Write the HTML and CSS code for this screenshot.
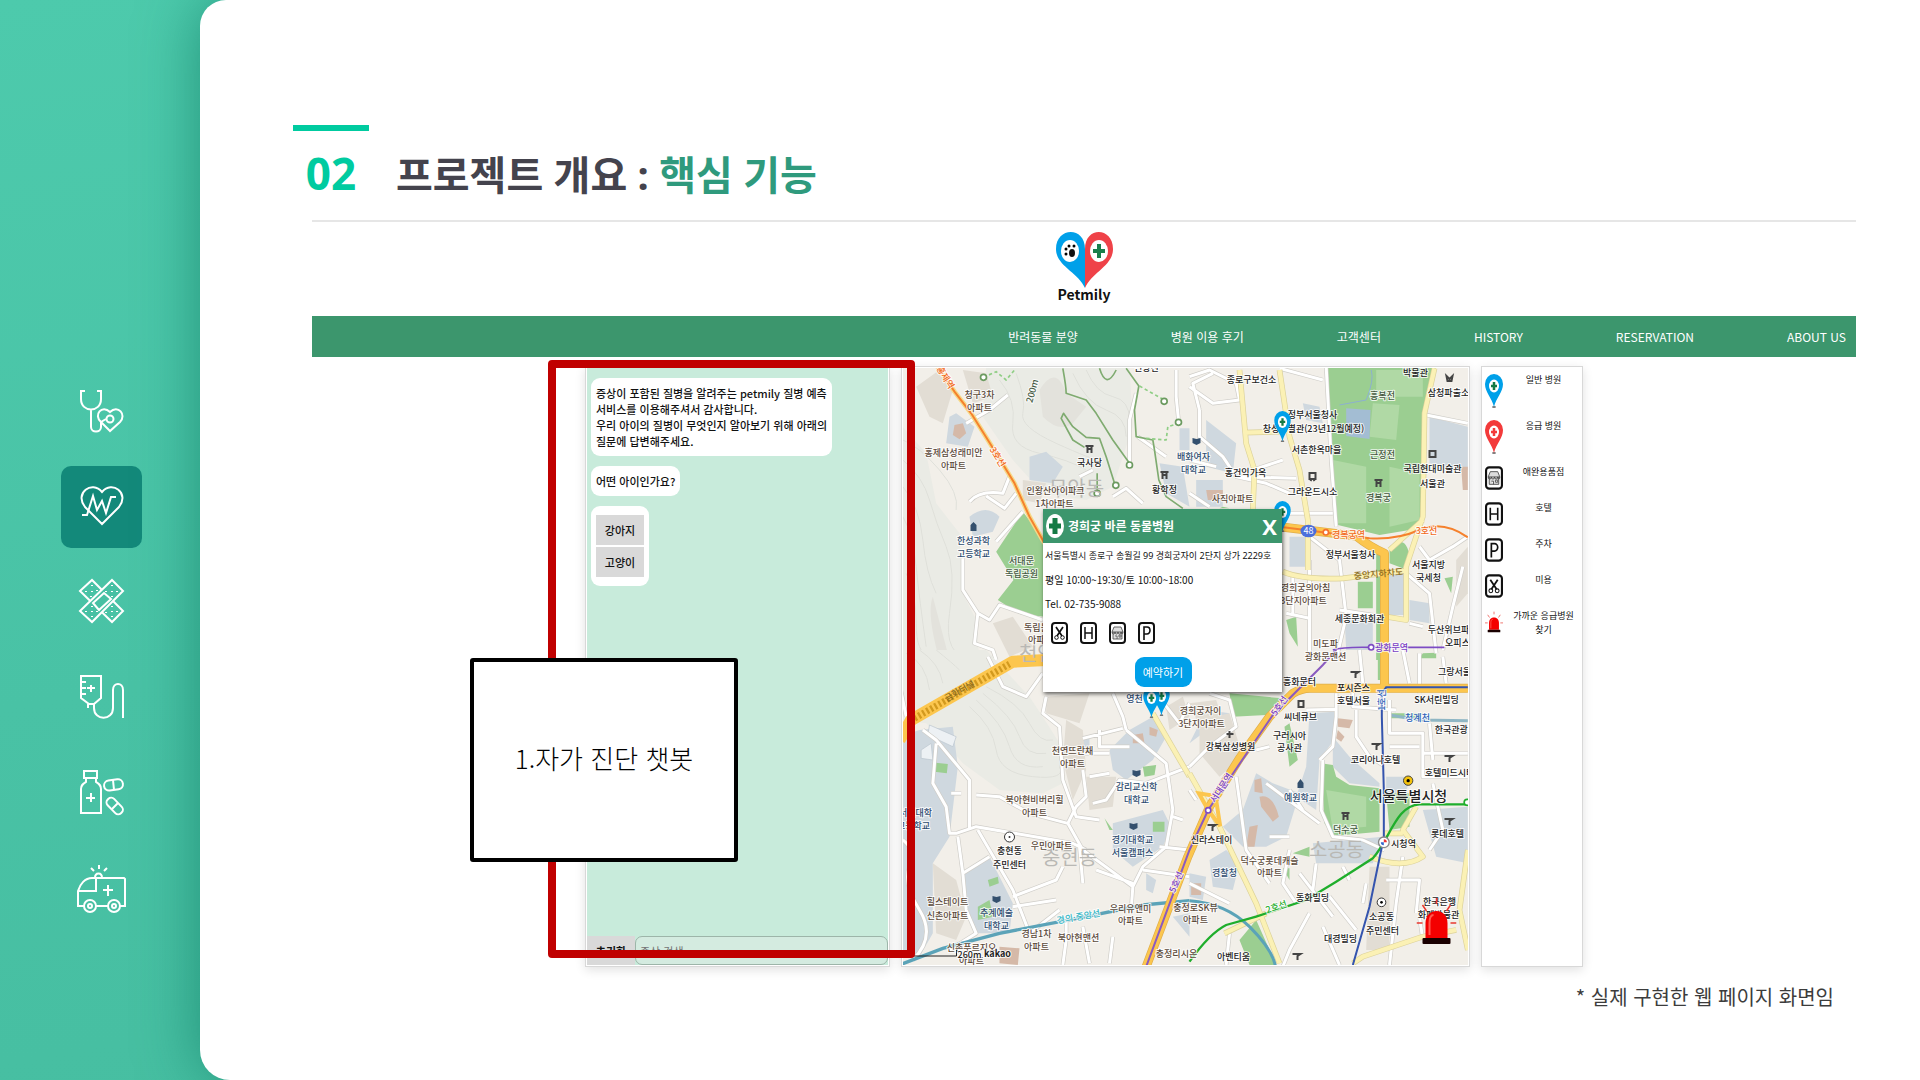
FILE: index.html
```html
<!DOCTYPE html>
<html lang="ko">
<head>
<meta charset="utf-8">
<meta name="viewport" content="width=device-width, initial-scale=1">
<title>프로젝트 개요 : 핵심 기능</title>
<link rel="stylesheet" href="styles.css">
</head>
<body>
<svg class="defs" aria-hidden="true">
  <defs>
    <symbol id="pin" viewBox="0 0 18 35">
      <ellipse cx="9" cy="33" rx="2" ry="1" fill="#777"/>
      <path d="M9 33C7 24 0 18 0 10a9 10 0 0 1 18 0c0 8-7 14-9 23z" fill="currentColor"/>
      <ellipse cx="9" cy="12" rx="5" ry="6.500" fill="#fff"/>
      <path class="pin-cross" d="M9 8v8M6 12h6" stroke-width="2.500"/>
    </symbol>
    <symbol id="ic-scissors" viewBox="0 0 17 22">
      <rect x="1" y="1" width="15" height="20" rx="3" fill="#fff" stroke="#111" stroke-width="2"/>
      <path d="M5 5l6 9M12 5l-6 9" stroke="#111" stroke-width="1.700" fill="none"/>
      <circle cx="5.500" cy="15.500" r="1.800" fill="none" stroke="#111"/><circle cx="11.500" cy="15.500" r="1.800" fill="none" stroke="#111"/>
    </symbol>
    <symbol id="ic-hotel" viewBox="0 0 17 22">
      <rect x="1" y="1" width="15" height="20" rx="3" fill="#fff" stroke="#111" stroke-width="2"/>
      <path d="M5 5v12M12 5v12M5 11h7" stroke="#111" stroke-width="1.500" fill="none"/>
    </symbol>
    <symbol id="ic-store" viewBox="0 0 17 22">
      <rect x="1" y="1" width="15" height="20" rx="3" fill="#fff" stroke="#111" stroke-width="2"/>
      <path d="M5 5h7l2 5H3zM4 10v7h9v-7M3 10a1.500 2 0 0 0 3 0 1.500 2 0 0 0 3 0 1.500 2 0 0 0 3 0 1 2 0 0 0 2 0M6 14h2v3M10 13h2v2h-2z" stroke="#444" fill="#ddd" stroke-width=".8"/>
    </symbol>
    <symbol id="ic-parking" viewBox="0 0 17 22">
      <rect x="1" y="1" width="15" height="20" rx="3" fill="#fff" stroke="#111" stroke-width="2"/>
      <path d="M6 18V5h3a3 3.500 0 0 1 0 7H6" stroke="#111" stroke-width="1.600" fill="none"/>
    </symbol>
    <symbol id="ic-siren" viewBox="0 0 40 48">
      <path d="M20 1v6M6 8l4 6M34 8l-4 6M0 26h6M34 26h6" stroke="#e8382f" stroke-width="1.500"/>
      <path d="M9 41V26c0-16 22-16 22 0v15z" fill="#f40000"/>
      <path d="M13 38V26c0-6 2-8 4-8" stroke="#ff5a50" stroke-width="2" fill="none"/>
      <rect x="6" y="41" width="28" height="6" rx="1" fill="#1a0000"/>
    </symbol>
    <path id="streets-nw" d="M210 425Q240 390 310 400L330 350M260 408L315 445 350 400M200 190L270 150 325 105M190 595V690L235 760 225 850 280 870 290 900M235 760L270 780 300 735 430 780M290 545L370 455M690 310V180L710 100M830 30V110L837 180M540 350L580 330M640 410L680 385 730 430M715 230L800 290"/>
    <path id="streets-ne" d="M0 50L60 30 140 70 150 120 70 130 0 80M30 150L10 70 70 40M30 150V230L100 290 140 350 230 370 300 400M140 350L320 355M190 330L280 300M410 20L425 300 440 500M270 25L400 60M300 460H430M0 400L60 440M360 530L450 600 470 770 440 900M360 600V900M450 750L580 770M290 760L360 775M650 640L720 700 740 880M710 165L835 190M690 560L720 600 790 560 835 530M310 640V760M0 300L80 320M760 870L790 740 820 620M660 790L700 800"/>
    <path id="streets-sw" d="M70 240L110 270 160 330 210 390V540M110 280L100 400 140 470 150 550 170 550 230 530 520 580 560 600M175 560L190 670 200 780 230 850 150 900M235 540L340 720 390 850M190 670L270 620M340 740L470 690 490 650M230 435L300 440 390 490 505 520 530 470 560 440 550 360M505 520L550 600 700 710 730 650 800 590 820 480 800 340 680 240M700 710L695 780M440 140L430 190 480 230 490 390 530 500 600 510M550 265L670 235M600 240V290H690M550 310H630M570 380L630 370M580 460L620 450 660 390 740 400 870 350M730 660L870 680M340 770L470 750M500 800V870L490 945M540 590L550 700M550 830L570 940M630 940L640 860M590 660L700 700M770 130L840 220 870 160M640 130L670 200 680 240M155 430H185M265 20L310 110 380 140 430 70M0 100L20 200M10 570Q50 600 30 650T60 780T40 930M820 500L850 510M780 590L870 600M390 850L480 780"/>
    <path id="streets-se" d="M440 130V200L430 290 390 330M400 330L395 480 430 560 520 570 585 600M0 350L60 290 140 230 120 150 60 130M200 300L240 290M230 400L390 520M140 380L170 600 240 700M500 180V260L540 320 580 345M600 150V250H700V380H835M690 10L690 130M760 20L770 100M600 290H690M700 310H835M640 0L660 100M510 0L520 100M590 690H690L680 790M300 600L280 700 320 760M380 640L370 720M330 670L430 800M460 650L480 690M0 700L120 760M360 790L300 900 280 950M400 830L450 945M640 620L620 760 600 945M530 700L520 760M690 800L700 870M20 450L0 420M720 220L730 330M730 400L760 540 720 600M490 110V170L620 180M350 180L440 178M100 50L170 0M240 560H300M300 420L340 480M120 850L110 945M420 740L500 840"/>
    <path id="avenues-ne" d="M150 30L170 250 195 330 190 450M165 218L270 215M270 30L300 230 330 330 355 480V630M280 635Q340 660 460 655L645 632M735 25L705 160 700 470 650 620V780L590 770M700 480L600 570"/>
    <path id="avenues-sw" d="M760 190L870 380"/>
    <path id="avenues-se" d="M0 370L90 530 200 760 270 940M105 850L230 790M540 620Q640 660 700 620L640 540 680 470M585 550H640M835 600L810 780 835 900M490 940L520 920 700 860 800 840"/>
    <path id="main-ne" d="M270 500L500 528Q540 560 585 580V905"/>
    <path id="main-se" d="M-130 950L-5 620 60 470 150 325 240 200 310 130Q340 112 370 115H835M585 0V110"/>
  </defs>
</svg>

<aside class="rail">
  <nav class="rail-nav" aria-label="목차">
    <a href="#s1" class="rail-link" aria-label="청진기"><svg viewBox="0 0 48 48" class="rail-icon">
      <path d="M7 3H3v8c0 14 20 14 20 0V3h-4M13 21v18c0 6 10 6 10 0v-5l5-3"/>
      <path d="M32 43l-9-9c-8-7 1-18 9-10 8-8 17 3 10 10z"/><circle cx="32" cy="31" r="3.500"/></svg></a>
    <a href="#s2" class="rail-link rail-link-on" aria-current="page" aria-label="심박"><svg viewBox="0 0 48 48" class="rail-icon">
      <path d="M24 41L7 24C-4 10 14-3 24 9c10-12 28 1 17 15z"/><path d="M4 32h5l6-19 4 14 5-9 4 12 5-16h5"/></svg></a>
    <a href="#s3" class="rail-link" aria-label="반창고"><svg viewBox="0 0 48 48" class="rail-icon">
      <path d="M2 13L14 2l31 31-11 11z"/><path class="cut" d="M34 2l11 11-31 31L2 33z"/><path d="M26 15l7 6-12 11-6-7z"/>
      <path class="dots" d="M14 7v1M8 13v1M14 13v1M19 12v1M13 18v1M34 7v1M28 13v1M34 13v1M39 13v1M34 18v1M14 28v1M8 33v1M14 33v1M19 33v1M14 38v1M34 28v1M28 34v1M34 33v1M39 33v1M34 38v1"/></svg></a>
    <a href="#s4" class="rail-link" aria-label="수액"><svg viewBox="0 0 48 48" class="rail-icon">
      <path d="M3 3h20v22l-7 6h-5l-8-6zM3 9h5M3 15h5M3 21h5M13 12v7M9 15h8M10 31v4M16 31v4c0 13 19 13 19 0V17c0-8 10-8 10 0v28"/></svg></a>
    <a href="#s5" class="rail-link" aria-label="의약품"><svg viewBox="0 0 48 48" class="rail-icon">
      <path d="M6 3h13v7H6zM8 10v4c-3 2-5 3-5 7v24h20V21c0-4-2-5-5-7v-4M13 25v9M8 30h9"/>
      <rect x="26" y="12" width="19" height="10" rx="5" transform="rotate(-8 35 17)"/><path d="M35 12l1 10"/>
      <rect x="27" y="33" width="19" height="9" rx="4" transform="rotate(46 36 38)"/><path d="M40 35l-6 6"/></svg></a>
    <a href="#s6" class="rail-link" aria-label="구급차"><svg viewBox="0 0 52 52" class="rail-icon rail-icon-wide">
      <path d="M8 45H2V30c2-7 7-13 14-13h32l1 1v27h-5M20 45h12M2 30h18V17M19 17c0-6 7-6 7 0M32 24v11M27 29h10M23 4v4M15 7l3 3M31 7l-3 3"/>
      <circle cx="14" cy="45" r="6"/><circle cx="14" cy="45" r="2"/><circle cx="38" cy="45" r="6"/><circle cx="38" cy="45" r="2"/></svg></a>
  </nav>
</aside>

<main class="sheet">
  <header class="head">
    <span class="head-no">02</span>
    <h1 class="head-title">프로젝트 개요 : <span class="head-key">핵심 기능</span></h1>
  </header>

  <section class="site">
    <div class="brand">
      <svg class="brand-mark" viewBox="0 0 57 56" aria-hidden="true">
        <path d="M29 56C22 40 0 34 0 17 0-5 29-6 29 17z" fill="#00a0e9"/>
        <path d="M29 56c7-16 28-22 28-39C57-5 29-6 29 17z" fill="#ef4248"/>
        <ellipse cx="14" cy="19" rx="9" ry="11" fill="#fff"/><ellipse cx="43" cy="19" rx="9" ry="11" fill="#fff"/>
        <path d="M43 12v14M37 19h12" stroke="#1a7f4b" stroke-width="4"/>
        <ellipse cx="16" cy="21" rx="3" ry="4" fill="#111"/><circle cx="10" cy="17" r="1.500"/><circle cx="13" cy="14" r="1.500"/><circle cx="18" cy="14" r="1.500"/><circle cx="10" cy="22" r="1.500"/>
      </svg>
      <span class="brand-name">Petmily</span>
    </div>
    <nav class="menu" aria-label="주 메뉴">
      <a href="#adopt">반려동물 분양</a><a href="#review">병원 이용 후기</a><a href="#help">고객센터</a><a href="#history">HISTORY</a><a href="#reservation">RESERVATION</a><a href="#about">ABOUT US</a>
    </nav>

    <div class="panels">
      <section class="card chat">
        <div class="chat-log">
          <p class="bubble">증상이 포함된 질병을 알려주는 petmily 질병 예측<br>서비스를 이용해주셔서 감사합니다.<br>우리 아이의 질병이 무엇인지 알아보기 위해 아래의<br>질문에 답변해주세요.</p>
          <p class="bubble">어떤 아이인가요?</p>
          <div class="bubble choices"><button type="button">강아지</button><button type="button">고양이</button></div>
        </div>
        <form class="chat-form">
          <button type="reset">초기화</button>
          <input type="text" aria-label="증상 검색" placeholder="증상 검색">
        </form>
      </section>

      <section class="card map">
        <svg class="map-art" viewBox="903 368 566 597" preserveAspectRatio="xMidYMid slice" role="img" aria-label="지도">
          <rect x="903" y="368" width="566" height="597" fill="#f2efe9"/>
          <g transform="translate(900 360) scale(.33333)">
            <path class="hill" d="M0 190L80 280 110 430 180 520 190 700 230 780 240 900H0zM260 20H690L700 200 640 380 560 420 430 400 340 300 250 170z"/>
            <path class="hill2" d="M420 90Q470 10 500 100L560 140 520 190Q480 220 430 170zM120 900Q80 760 100 710L150 900z"/>
            <path class="contour" d="M10 300Q70 350 90 420T140 560T150 760T220 900M10 380Q60 440 70 540T110 700M10 470Q40 520 50 620T80 860M300 60Q350 120 340 190T420 280T560 330M350 40Q380 120 370 160T470 250T600 300M560 30Q590 100 640 110T690 180M520 40Q560 130 620 150T680 230M10 240Q60 260 120 330T170 450M20 640Q50 700 50 790T90 890"/>
            <path class="school" d="M150 170L170 160 225 200 205 260 140 250zM390 290L440 275 490 320 460 370 390 360zM210 470Q260 430 300 470L280 515 220 530zM780 310L850 320 870 440 800 400zM840 205H870V270H840z"/>
            <path class="block" d="M50 80L120 30 160 90 130 190 90 170zM190 30L260 40 280 110 220 130zM370 360L440 370 420 430 370 420zM280 790L340 770 400 860 330 890z"/>
            <path class="court" d="M165 195L190 190 200 220 180 238 160 225z"/>
            <path class="park" d="M290 575L370 455 435 540V770L360 762 295 720 342 660z"/>
            <use href="#streets-nw" class="case"/><use href="#streets-nw" class="road"/>
            <path d="M100 0L165 95 215 160 290 280 345 370 390 470 435 550" fill="none" stroke="#f6d987" stroke-width="14"/>
            <path d="M100 0L165 95 215 160 290 280 345 370 390 470 435 550" fill="none" stroke="#f5812d" stroke-width="6"/>
            <path class="trail" d="M490 25Q500 80 500 100L560 120 590 160 640 240 690 310M555 262L520 240 485 175 492 160 520 200 560 232 600 235 620 290 645 370M593 340V400M600 25Q620 90 650 30M680 25L718 78 705 150 710 230 760 240 765 270 778 360 800 410 850 445"/>
            <path class="trail dash" d="M252 52L290 35 320 60 345 30M720 78L794 120M740 235L800 240 805 200 837 190"/>
            <g fill="#fff" stroke="#6b9a5f" stroke-width="5"><circle cx="252" cy="52" r="9"/><circle cx="690" cy="315" r="9"/><circle cx="649" cy="376" r="9"/><circle cx="593" cy="400" r="9"/><circle cx="794" cy="124" r="9"/><circle cx="837" cy="187" r="9"/></g>
          </g>
          <g transform="translate(1190 360) scale(.33333)">
            <path class="school" d="M50 180L140 250 130 340 50 320zM20 360H100V440H20zM340 130L390 140 400 190 350 180zM720 170L835 200V330L720 310zM300 530H350V620H300zM595 645H645V765H595zM660 720L720 730V790L660 780zM465 770H550V870H470z"/>
            <path class="court" d="M50 390H100V420H55zM815 320H835V390H820z"/>
            <path class="park" d="M412 20H740L705 160 695 480 660 510 570 525 445 495 428 300z"/>
            <path class="park2" d="M430 300L530 320 530 490 445 490zM550 130L630 135 620 240 540 230zM600 320L690 340V480L600 500zM560 30H700V110H560z"/>
            <path d="M470 145L543 150 540 237 470 228z" fill="#a3bdd3"/>
            <path d="M545 30Q555 60 530 120L450 135" fill="none" stroke="#8db0cf" stroke-width="3"/>
            <path class="park" d="M600 560Q650 520 660 590L640 625 600 610zM505 665H550V745H505zM560 580H578V900H560zM290 780L320 770 325 860 300 820zM700 880L740 878 740 895 690 895zM100 440L120 445H90zM765 655L790 650 785 700z"/>
            <path class="block" d="M800 600L835 560V700L800 740z"/>
            <use href="#streets-ne" class="case"/><use href="#streets-ne" class="road"/>
            <use href="#avenues-ne" class="yellow-case"/><use href="#avenues-ne" class="yellow"/>
            <use href="#main-ne" class="main-case"/><use href="#main-ne" class="main-road"/>
            <path d="M270 500L400 517 540 535Q620 540 690 510T835 532" fill="none" stroke="#f5812d" stroke-width="6"/>
            <circle cx="409" cy="517" r="8" fill="#fff" stroke="#f5712d" stroke-width="5"/>
            <ellipse cx="357" cy="513" rx="24" ry="19" fill="#4b6fdb"/>
            <path d="M430 870Q460 860 545 862H765" fill="none" stroke="#7d4cc4" stroke-width="5"/>
            <circle cx="545" cy="862" r="8" fill="#fff" stroke="#7d4cc4" stroke-width="5"/>
          </g>
          <g transform="translate(900 650) scale(.33333)">
            <path class="hill" d="M0 0H260L390 140 430 200 480 280 490 400 430 430 300 420 190 340 130 270 80 220 0 210z"/>
            <path class="contour" d="M210 170Q280 230 290 300T400 380T480 350M230 150Q310 220 330 290T430 350M250 130Q340 200 360 260T440 310M260 110Q360 160 390 220T460 270M20 10Q80 40 90 120M60 0Q120 40 130 100M110 0Q160 40 180 60"/>
            <path class="school" d="M60 240L160 230 175 350 150 560 100 640 100 850 60 920H0V260zM190 670L270 620 340 760 330 850 230 850 200 760zM630 300L690 240 760 200 800 260 760 330 680 390 640 360zM640 520L790 480 815 530 790 590 700 650 640 600zM550 265H570V310H550zM740 670L770 690 760 730 740 720zM820 800L870 790V860z"/>
            <path class="block" d="M440 140L570 130 540 220 440 190zM500 210L550 240 560 360 520 450 490 330zM560 380L650 380 640 470 570 480zM100 640L170 690 200 800 170 870 110 850zM800 170L850 140 870 200 810 240z"/>
            <path class="court" d="M700 255L730 250 735 280 700 280zM750 230L775 240 770 260 750 255zM300 890L360 895 355 945 300 940z"/>
            <path class="park" d="M108 338L145 342 142 370 105 365zM730 350L770 345 765 375 735 380zM760 515L795 515 795 545 760 545zM265 690L295 680 298 700 270 710zM235 770L270 750 280 800 235 810zM615 505L640 540 630 540z"/>
            <path d="M90 225L170 260 160 290 85 255zM65 300L95 280 100 330 65 325z" fill="#edf1f4" stroke="#b9c4cd" stroke-width="2"/>
            <use href="#streets-sw" class="case"/><use href="#streets-sw" class="road"/>
            <path class="main-road wide" d="M0 270L35 210 340 35 440 30"/>
            <path d="M45 205L330 42" fill="none" stroke="#d39a1e" stroke-width="20" stroke-dasharray="7 7"/>
            <use href="#avenues-sw" class="yellow-case"/><use href="#avenues-sw" class="yellow"/>
            <path d="M0 945L130 895 300 850 560 800 730 765 870 752" fill="none" stroke="#5ba3b8" stroke-width="10"/>
          </g>
          <g transform="translate(1190 650) scale(.33333)">
            <path class="school" d="M360 190L435 185 440 260 390 330 380 480 320 440 350 350zM100 530L160 480 200 370 250 400 330 430 290 560 230 590 160 590zM60 630L110 600 150 640 130 720 70 710zM0 670L50 680 40 750 0 740zM430 260L480 320 570 400V410L480 400 430 350zM590 380H660L650 430H590zM700 480L835 470V640L740 620zM370 580L580 560 550 640 380 640zM0 280L120 190 50 180z"/>
            <path class="block" d="M30 210L120 190 160 320 90 380 30 310zM540 650H600V900H530zM0 160L80 150 100 210 30 230z"/>
            <path class="court" d="M195 390L215 385 220 430 195 425zM210 440Q250 430 268 500L250 515 215 470zM180 530L205 525 195 590 170 590zM445 205L490 210 480 235 445 230zM445 240L465 260 455 275 440 265zM5 700H35V735H5z"/>
            <path class="park" d="M120 130L280 145 230 195 130 200zM395 340L430 345 440 380 480 405 570 415V545L430 558 405 520zM590 430H660V530L600 540zM285 230L300 220 325 330 300 350zM150 870L200 810 260 945H180zM310 610L360 590V620zM565 0H578V90H565zM600 190H700L690 205H600zM280 655H300V690z"/>
            <path class="park2" d="M410 420L530 440V530L430 540z"/>
            <path d="M600 195L690 210 835 212" fill="none" stroke="#8fb6c4" stroke-width="9"/>
            <use href="#streets-se" class="case"/><use href="#streets-se" class="road"/>
            <use href="#avenues-se" class="yellow-case"/><use href="#avenues-se" class="yellow"/>
            <use href="#main-se" class="main-case"/><use href="#main-se" class="main-road"/>
            <path d="M56 480L28 430 78 438 92 528z" fill="none" stroke="#fcc64e" stroke-width="12"/>
            <path d="M-130 950L0 600 56 480 250 195 400 45 440 0" fill="none" stroke="#8a5ac0" stroke-width="6"/>
            <path d="M0 752Q110 760 180 830T258 950" fill="none" stroke="#5ba3b8" stroke-width="9"/>
            <path d="M0 935Q60 850 110 825L200 800 350 750 440 695 550 625C600 570 620 465 690 463H835" fill="none" stroke="#1fae2c" stroke-width="7"/>
            <path d="M835 112H590L577 130V200L583 420V570L575 600 540 770 490 945" fill="none" stroke="#3454ae" stroke-width="6"/>
            <circle cx="56" cy="481" r="8" fill="#fff" stroke="#7d4cc4" stroke-width="5"/>
            <circle cx="583" cy="577" r="16" fill="#fff" stroke="#888" stroke-width="4"/><path d="M583 577v-9a9 9 0 0 1 9 9z" fill="#e33"/><path d="M583 577v9a9 9 0 0 1-9-9z" fill="#36c"/>
            <circle cx="833" cy="457" r="9" fill="#fff" stroke="#1fae2c" stroke-width="5"/>
            <circle cx="656" cy="392" r="14" fill="#f4c20c" stroke="#444" stroke-width="3"/><circle cx="656" cy="392" r="5"/>
            <circle cx="576" cy="757" r="13" fill="#fff" stroke="#333" stroke-width="3"/><circle cx="576" cy="757" r="4"/>
          </g>
          <circle cx="1010" cy="837" r="5" fill="#fff" stroke="#333"/><circle cx="1010" cy="837" r="1" fill="#333"/>
          <g class="poi">
            <path d="M1086 446h8M1087 449h6M1088 446v7M1092 446v7M1161 472h8M1162 475h6M1163 472v7M1167 472v7M1375 480h8M1376 483h6M1377 480v7M1381 480v7M1342 813h8M1343 816h6M1344 813v7M1348 813v7"/>
            <path d="M1310 473h6v6h-6zM1311 481l1-2M1315 481l-1-2M1430 451h6v6h-6zM1447 376l3 3 3-3-1 5h-4zM1230 731v7M1227 734h7M1299 701h5v6h-5zM1351 672h8l-3 2v4M1372 744h8l-3 2v4M1445 756h8l-3 2v4M1445 819h8l-3 2v4M1208 825h8l-3 2v4M1293 954h8l-3 2v4"/>
            <path class="edu" d="M971 531v-6l3-3 3 3v6zM1298 788v-5l3-4 3 4v5zM1133 770l4 1 4-1v5l-4 2-4-2zM1130 823l4 1 4-1v5l-4 2-4-2zM993 896l4 1 4-1v5l-4 2-4-2zM1193 438l4 1 4-1v5l-4 2-4-2z"/>
          </g>
          <g class="ward"><text x="1077" y="496">무악동</text><text x="1047" y="661">천연동</text><text x="1070" y="865">충현동</text><text x="1337" y="857">소공동</text></g>
          <g class="label apt">
            <text x="980" y="398">청구3차</text><text x="980" y="411">아파트</text><text x="954" y="456">홍제삼성래미안</text><text x="954" y="469">아파트</text>
            <text x="1056" y="494">인왕산아이파크</text><text x="1055" y="507">1차아파트</text><text x="1233" y="502">사직아파트</text><text x="1037" y="631">독립문</text><text x="1041" y="643">아파트</text>
            <text x="1306" y="591">경희궁의아침</text><text x="1304" y="604">3단지아파트</text><text x="1326" y="647">미도파</text><text x="1326" y="660">광화문맨션</text>
            <text x="1201" y="714">경희궁자이</text><text x="1202" y="727">3단지아파트</text><text x="1073" y="754">천연뜨란채</text><text x="1073" y="767">아파트</text>
            <text x="1035" y="803">북아현비버리힐</text><text x="1035" y="816">아파트</text><text x="1052" y="849">우민아파트</text><text x="948" y="905">힐스테이트</text><text x="948" y="919">신촌아파트</text>
            <text x="1037" y="937">경남1차</text><text x="1037" y="950">아파트</text><text x="1079" y="941">북아현맨션</text><text x="1131" y="912">우리유앤미</text><text x="1131" y="924">아파트</text>
            <text x="972" y="951">신촌푸르지오</text><text x="972" y="964">아파트</text><text x="1196" y="911">충정로SK뷰</text><text x="1196" y="923">아파트</text><text x="1177" y="957">충정리시온</text>
            <text x="1270" y="864">덕수궁롯데캐슬</text><text x="1270" y="876">아파트</text>
          </g>
          <g class="label">
            <text x="1147" y="371">인왕산</text><text x="1090" y="466">국사당</text><text x="1165" y="493">황학정</text><text x="1252" y="383">종로구보건소</text>
            <text x="1313" y="418">정부서울청사</text><text x="1314" y="432">창성동별관(23년12월예정)</text><text x="1317" y="453">서촌한옥마을</text><text x="1246" y="476">홍건익가옥</text><text x="1313" y="495">그라운드시소</text>
            <text x="1416" y="376">박물관</text><text x="1449" y="396">삼청파출소</text><text x="1433" y="472">국립현대미술관</text><text x="1433" y="487">서울관</text><text x="1351" y="558">정부서울청사</text>
            <text x="1429" y="568">서울지방</text><text x="1429" y="581">국세청</text><text x="1360" y="622">세종문화회관</text><text x="1449" y="633">두산위브파</text><text x="1458" y="646">오피스</text>
            <text x="1300" y="685">흥화문터</text><text x="1354" y="691">포시즌스</text><text x="1354" y="704">호텔서울</text><text x="1455" y="675">그랑서울</text><text x="1437" y="703">SK서린빌딩</text><text x="1301" y="720">씨네큐브</text>
            <text x="1460" y="733">한국관광공사</text><text x="1290" y="739">구러시아</text><text x="1290" y="751">공사관</text><text x="1231" y="750">강북삼성병원</text><text x="1376" y="763">코리아나호텔</text><text x="1450" y="776">호텔미드시티</text>
            <text x="1212" y="843">신라스테이</text><text x="1404" y="847">시청역</text><text x="1448" y="837">롯데호텔</text><text x="1313" y="901">동화빌딩</text><text x="1440" y="905">한국은행</text><text x="1439" y="918">화폐박물관</text>
            <text x="1382" y="920">소공동</text><text x="1383" y="934">주민센터</text><text x="1341" y="942">대경빌딩</text><text x="1234" y="960">아벤티움</text><text x="1010" y="854">충현동</text><text x="1010" y="868">주민센터</text>
            <text class="city" x="1409" y="801">서울특별시청</text>
          </g>
          <g class="label campus">
            <text x="974" y="544">한성과학</text><text x="974" y="557">고등학교</text><text x="1194" y="460">배화여자</text><text x="1194" y="473">대학교</text><text x="1301" y="801">예원학교</text><text x="1137" y="790">감리교신학</text><text x="1137" y="803">대학교</text>
            <text x="1133" y="843">경기대학교</text><text x="1133" y="856">서울캠퍼스</text><text x="997" y="916">추계예술</text><text x="997" y="929">대학교</text><text x="916" y="816">서연대학</text><text x="914" y="829">고등학교</text><text x="1225" y="876">경찰청</text><text x="1135" y="702">영천</text>
          </g>
          <g class="label green"><text x="1022" y="564">서대문</text><text x="1022" y="577">독립공원</text><text x="1383" y="399">흥복전</text><text x="1383" y="458">근정전</text><text x="1379" y="501">경복궁</text><text x="1346" y="833">덕수궁</text><text x="1033" y="394" transform="rotate(-75 1033 391)">200m</text></g>
          <g class="label orange"><text x="945" y="380" transform="rotate(58 945 378)">홍제역</text><text x="998" y="460" transform="rotate(58 998 457)">3호선</text><text x="1349" y="538">경복궁역</text><text x="1427" y="534">3호선</text></g>
          <g class="label purple"><text x="1392" y="651">광화문역</text><text x="1222" y="791" transform="rotate(-57 1222 788)">서대문역</text><text x="1280" y="709" transform="rotate(-55 1280 706)">5호선</text><text x="1177" y="885" transform="rotate(-66 1177 882)">5호선</text></g>
          <g class="label blue"><text x="1418" y="721">청계천</text><text x="1382" y="703" transform="rotate(-90 1382 700)">1호선</text></g>
          <g class="label teal"><text x="1079" y="920" transform="rotate(-10 1079 917)">경의·중앙선</text></g>
          <g class="label lime"><text x="1277" y="910" transform="rotate(-18 1277 907)">2호선</text></g>
          <g class="label tan"><text x="960" y="694" transform="rotate(-30 960 691)">금화터널</text><text x="1379" y="577" transform="rotate(-5 1379 574)">중앙지하차도</text></g>
          <text class="shield" x="1309" y="534">48</text>
          <path d="M914 956H957V950" fill="none" stroke="#222"/>
          <g class="label"><text x="970" y="958">260m</text><text class="logo" x="998" y="957">kakao</text></g>
          <g color="#00a0e9" class="pins"><use href="#pin" x="1274" y="411" width="18" height="32"/><use href="#pin" x="1274" y="501" width="18" height="32"/><use href="#pin" x="1153" y="685" width="18" height="32"/><use href="#pin" x="1143" y="687" width="18" height="32"/></g>
          <use href="#ic-siren" x="1417" y="897" width="40" height="48"/>
        </svg>

        <article class="popup">
          <header class="popup-head">
            <svg width="18" height="24" viewBox="0 0 18 24" aria-hidden="true"><ellipse cx="9" cy="12" rx="9" ry="12" fill="#fff"/><path d="M9 4v16M3 12h12" stroke="#157a45" stroke-width="5"/></svg>
            <h2>경희궁 바른 동물병원</h2>
            <button type="button" aria-label="닫기">X</button>
          </header>
          <div class="popup-body">
            <p class="addr">서울특별시 종로구 송월길 99 경희궁자이 2단지 상가 2229호</p>
            <p>평일 10:00~19:30/토 10:00~18:00</p>
            <p>Tel. 02-735-9088</p>
            <div class="tags">
              <svg><use href="#ic-scissors"/></svg><svg><use href="#ic-hotel"/></svg><svg><use href="#ic-store"/></svg><svg><use href="#ic-parking"/></svg>
            </div>
            <button type="button" class="book">예약하기</button>
          </div>
        </article>
      </section>

      <aside class="card legend">
        <ul>
          <li class="tall"><svg class="lg-pin blue-pin"><use href="#pin"/></svg><span>일반 병원</span></li>
          <li class="tall"><svg class="lg-pin red-pin"><use href="#pin"/></svg><span>응급 병원</span></li>
          <li><svg><use href="#ic-store"/></svg><span>애완용품점</span></li>
          <li><svg><use href="#ic-hotel"/></svg><span>호텔</span></li>
          <li><svg><use href="#ic-parking"/></svg><span>주차</span></li>
          <li><svg><use href="#ic-scissors"/></svg><span>미용</span></li>
          <li><svg><use href="#ic-siren"/></svg><span>가까운 응급병원 찾기</span></li>
        </ul>
      </aside>

      <div class="focus-frame"></div>
      <div class="callout">1.자가 진단 챗봇</div>
    </div>
  </section>
  <p class="note">* 실제 구현한 웹 페이지 화면임</p>
</main>
</body>
</html>
```
FILE: styles.css
```css
* { box-sizing: border-box; }
body {
  margin: 0;
  min-height: 100vh;
  display: flex;
  font-family: "Noto Sans CJK KR", "Noto Sans", sans-serif;
  color: #111;
  background: linear-gradient(170deg, #4dcaac 0%, #49c2a5 50%, #45bc9f 100%);
}
p, h1, h2, ul { margin: 0; padding: 0; }
button, input { font: inherit; color: inherit; border: 0; padding: 0; }
a { color: inherit; text-decoration: none; }
.defs { position: absolute; width: 0; height: 0; }

.rail { flex: 0 0 200px; padding: 371px 0 0 61px; }
.rail-nav { display: flex; flex-direction: column; gap: 13px; }
.rail-link { width: 81px; height: 82px; border-radius: 10px; display: grid; place-items: center; color: #fff; }
.rail-link-on { background: #13897a; }
.rail-icon { width: 48px; height: 48px; fill: none; stroke: currentColor; stroke-width: 2; }
.rail-icon-wide { width: 52px; height: 52px; }
.rail-icon .cut { fill: #47c0a3; }

.sheet {
  flex: 1;
  min-width: 0;
  background: #fff;
  border-radius: 26px 0 0 30px;
  box-shadow: 0 0 60px rgba(20, 130, 105, .75);
  padding-top: 125px;
}
.head { display: flex; margin-left: 93px; }
.head-no {
  width: 76px;
  border-top: 6px solid #00cba0;
  padding-top: 12px;
  font: 700 44px/60px "Noto Sans", sans-serif;
  color: #00cba0;
  text-align: center;
}
.head-title {
  margin-left: 27px;
  padding-top: 20px;
  font: 700 40px/60px "Noto Sans", "Noto Sans CJK KR", sans-serif;
  color: #44434d;
}
.head-key { color: #2f9a7d; }

.site { margin: 15px 64px 0 112px; border-top: 2px solid #e6e6e6; }
.brand { height: 94px; padding-top: 10px; display: flex; flex-direction: column; align-items: center; }
.brand-mark { width: 57px; height: 56px; }
.brand-name { margin-top: -4px; font-size: 14px; line-height: 20px; font-weight: 700; }
.menu {
  display: flex;
  justify-content: flex-end;
  gap: 93px;
  padding-right: 10px;
  background: #3c966d;
  color: #fff;
  font-size: 12px;
  line-height: 41px;
}

.panels { position: relative; max-width: 998px; margin: 9px auto 0; display: flex; gap: 11px; }
.card { background: #fff; border: 1px solid #d8d8d8; padding: 1px; box-shadow: 0 3px 10px rgba(0, 0, 0, .12); }

.chat { flex: 0 0 305px; display: flex; flex-direction: column; }
.chat-log { flex: 1; background: #c8ebdb; padding: 10px 4px; display: flex; flex-direction: column; align-items: flex-start; gap: 10px; }
.bubble { background: #fff; border-radius: 9px; padding: 7px 5px; font-size: 11px; line-height: 16px; font-weight: 500; white-space: nowrap; }
.choices { display: flex; flex-direction: column; gap: 2px; padding: 9px 5px; }
.choices button { width: 48px; height: 30px; background: #d9d9d9; }
.chat-form { display: flex; background: #c8ebdb; font-size: 11px; }
.chat-form button { width: 48px; height: 29px; background: #d9d9d9; font-weight: 700; }
.chat-form input { flex: 1; min-width: 0; height: 29px; background: #d4ebe0; border: 1px solid #9db5a9; border-radius: 7px; padding: 0 4px; }

.map { flex: 1; min-width: 0; position: relative; }
.map-art { display: block; width: 100%; height: 597px; }
.hill { fill: #eaebe5; }
.hill2 { fill: #e3e2dc; }
.contour { fill: none; stroke: #dfe0da; stroke-width: 3; }
.school { fill: #cfd8df; }
.block { fill: #e2ddd4; }
.court { fill: #d5b9a8; }
.park { fill: #9bce91; }
.park2 { fill: #b0d9a5; }
.case, .road, .yellow, .yellow-case, .main-road, .main-case, .trail { fill: none; stroke-linejoin: round; }
.case { stroke: #cfcdc8; stroke-width: 13; }
.road { stroke: #fff; stroke-width: 9; }
.yellow-case { stroke: #dcd29a; stroke-width: 17; }
.yellow { stroke: #fbf1b5; stroke-width: 13; }
.main-case { stroke: #dfae4a; stroke-width: 27; }
.main-road { stroke: #fcc64e; stroke-width: 23; }
.main-road.wide { stroke-width: 36; }
.trail { stroke: #7fab70; stroke-width: 5; }
.trail.dash { stroke: #8fce85; stroke-dasharray: 10 8; }
.poi { fill: none; stroke: #444; stroke-width: 2; }
.poi .edu { fill: #34506e; stroke: none; }
.ward { fill: #b9b8b4; font-size: 20px; text-anchor: middle; }
.label { fill: #222; font-size: 9px; font-weight: 500; text-anchor: middle; stroke: #fff; stroke-width: 2px; stroke-opacity: .8; paint-order: stroke; stroke-linejoin: round; }
.apt { fill: #5b4a3a; }
.campus { fill: #2f4d70; }
.green { fill: #44593f; }
.orange { fill: #f26a1b; }
.purple { fill: #7a3fc4; }
.blue { fill: #2c62b8; }
.teal { fill: #35b7c6; }
.lime { fill: #1fae2c; }
.tan { fill: #8a6a20; stroke: none; }
.city { font-size: 14px; }
.logo { font-weight: 700; }
.shield { fill: #fff; font-size: 9px; text-anchor: middle; }
.pins, .blue-pin { --cross: #157a45; }
.pin-cross { stroke: var(--cross, currentColor); }

.popup { position: absolute; left: 141px; top: 142px; width: 239px; background: #fff; box-shadow: 1px 2px 4px rgba(0, 0, 0, .6); }
.popup-head { display: flex; align-items: center; gap: 4px; height: 34px; padding: 0 5px 0 3px; background: #3c966d; color: #fff; }
.popup-head h2 { flex: 1; font-size: 12px; line-height: 20px; }
.popup-head button { background: none; font: 700 22px/30px "Open Sans", sans-serif; }
.popup-body { padding: 1px 1px 5px 2px; display: flex; flex-direction: column; }
.popup-body p { font-size: 10px; line-height: 24px; white-space: nowrap; }
.popup-body .addr { font-family: "Noto Sans", "Noto Sans CJK KR", sans-serif; font-size: 9px; }
.tags { display: flex; gap: 12px; padding: 6px 6px 0; }
.tags svg { width: 17px; height: 22px; }
.book { align-self: center; margin-top: 13px; width: 57px; height: 30px; border-radius: 9px; background: #00a0e9; color: #fff; font-size: 11px; }

.legend { flex: 0 0 102px; padding: 6px 2px; }
.legend ul { list-style: none; }
.legend li { display: flex; gap: 4px; height: 36px; font-size: 9px; line-height: 14px; text-align: center; word-break: keep-all; }
.legend .tall { height: 46px; }
.legend svg { flex: 0 0 18px; height: 24px; margin: 1px 0 0 1px; }
.legend .lg-pin { height: 35px; }
.legend span { flex: 1; padding: 0 4px; }
.blue-pin { color: #00a0e9; }
.red-pin { color: #f33a3a; }

.focus-frame { position: absolute; left: -37px; top: -6px; width: 367px; height: 598px; border: 8px solid #c00000; border-radius: 4px; pointer-events: none; }
.callout {
  position: absolute; left: -115px; top: 292px; width: 268px; height: 204px;
  display: grid; place-items: center;
  padding-bottom: 6px;
  background: #fff; border: 4px solid #000; border-radius: 3px;
  font-size: 26px; font-weight: 300; color: #000;
}
.note { margin: 15px 86px 40px 0; text-align: right; font-size: 20px; line-height: 30px; color: #3c3c3c; }
```
